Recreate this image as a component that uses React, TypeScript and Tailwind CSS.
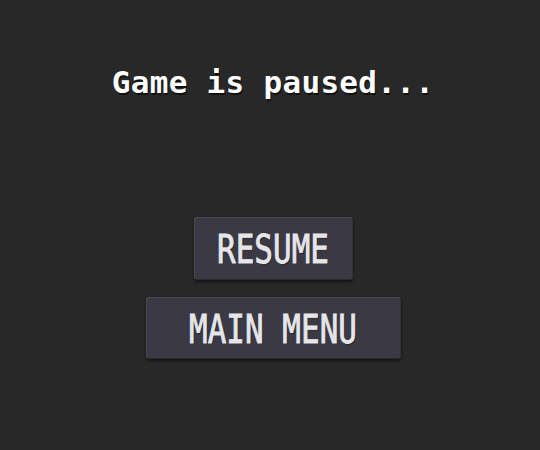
import React from "react";

export default function App() {
  const mono = { fontFamily: '"DejaVu Sans Mono", "Liberation Mono", monospace' };
  return (
    <div className="w-[540px] h-[450px] bg-[#282828] flex flex-col items-center pl-[6px]" style={mono}>
      <div className="mt-[67px] text-[31px] leading-[31px] font-bold text-white tracking-[0.3px] [text-shadow:1px_2px_0_#111]">
        Game is paused...
      </div>
      <div className="mt-[119px] flex flex-col items-center gap-[17px]">
        <button className="w-[159px] h-[63px] rounded-[3px] bg-[#3a3944] border border-[#4a4956] border-b-[#2c2b33] border-r-[#33323b] shadow-[0_2px_3px_rgba(0,0,0,0.5)] text-[#e6e6ea] text-[31px] font-normal flex items-center justify-center pt-[2px] [text-shadow:1px_1px_0_#1a1a1f] [-webkit-text-stroke:0.7px_#e6e6ea]">
          <span className="scale-y-[1.24] inline-block leading-none">RESUME</span>
        </button>
        <button className="w-[255px] h-[62px] rounded-[3px] bg-[#3a3944] border border-[#4a4956] border-b-[#2c2b33] border-r-[#33323b] shadow-[0_2px_3px_rgba(0,0,0,0.5)] text-[#e6e6ea] text-[31px] font-normal flex items-center justify-center pt-[2px] [text-shadow:1px_1px_0_#1a1a1f] [-webkit-text-stroke:0.7px_#e6e6ea]">
          <span className="scale-y-[1.24] inline-block leading-none">MAIN MENU</span>
        </button>
      </div>
    </div>
  );
}
